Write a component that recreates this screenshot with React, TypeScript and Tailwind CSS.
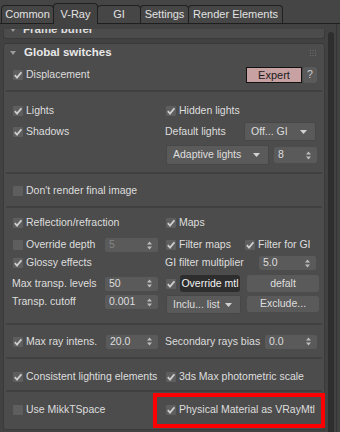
import React from 'react';

function Box({ on }: { on: boolean }) {
  return (
    <span className="w-[10px] h-[10px] shrink-0 bg-[#5e5e5e] rounded-[1px] flex items-center justify-center">
      {on && (
        <svg width="8" height="8" viewBox="0 0 8 8">
          <path d="M0.8 4.1 L3 6.6 L7.4 1.3" fill="none" stroke="#cfcfcf" strokeWidth="1.7" />
        </svg>
      )}
    </span>
  );
}

function Check({ on, label }: { on: boolean; label: string }) {
  return (
    <div className="flex items-center gap-[3px] whitespace-nowrap">
      <Box on={on} />
      <span>{label}</span>
    </div>
  );
}

function Spin({ v, cls, dim }: { v: string; cls: string; dim?: boolean }) {
  return (
    <div className={`flex items-center pl-[4px] pr-[6px] bg-[#5a5a5a] rounded-[2px] ${cls}`}>
      <span className={`flex-1 ${dim ? 'text-[#858585]' : ''}`}>{v}</span>
      <svg width="5" height="9" viewBox="0 0 5 9">
        <path d="M0 3.5 L2.5 0.5 L5 3.5Z M0 5.5 L2.5 8.5 L5 5.5Z" fill="#bdbdbd" />
      </svg>
    </div>
  );
}

function Drop({ v, cls }: { v: string; cls: string }) {
  return (
    <div className={`flex items-center justify-between pl-[6px] pr-[8px] bg-[#5a5a5a] border border-[#474747] rounded-[2px] ${cls}`}>
      <span className="whitespace-nowrap">{v}</span>
      <svg width="7" height="4" viewBox="0 0 7 4">
        <path d="M0 0H7L3.5 4Z" fill="#d2d2d2" />
      </svg>
    </div>
  );
}

function Sep({ cls }: { cls: string }) {
  return <div className={`h-[2px] mx-[2px] bg-[#404040] ${cls}`} />;
}

const tabs = [
  { t: 'Common', w: 'w-[53px]' },
  { t: 'V-Ray', w: 'w-[45px]', on: true },
  { t: 'GI', w: 'w-[44px]' },
  { t: 'Settings', w: 'w-[49px]' },
  { t: 'Render Elements', w: 'w-[95px]' },
];

export default function App() {
  return (
    <div className="relative w-[340px] h-[432px] overflow-hidden bg-[#454545] text-[10.5px] text-[#dedede] font-['Liberation_Sans',Arial,sans-serif]">
      <div className="h-[24px] flex items-end pl-[2px] border-b border-[#1f1f1f]">
        {tabs.map((tab) => (
          <div
            key={tab.t}
            className={`${tab.w} -ml-px flex items-center justify-center border border-b-0 border-[#202020] rounded-t-[4px] text-[11px] text-[#e2e2e2] ${
              tab.on ? 'h-[21px] -mb-px bg-[#424242] relative z-10' : 'h-[18px] bg-[#464646]'
            }`}
          >
            {tab.t}
          </div>
        ))}
      </div>

      <div className="flex bg-[#424242] h-[408px]">
        <div className="w-[326px] pl-[3px] pr-[1px] flex flex-col">
          <div className="mt-[5px] h-[10px] overflow-hidden bg-[#4c4c4c] border border-t-0 border-[#3a3a3a] rounded-b-[3px] flex items-start">
            <span className="ml-[6px] -mt-[1px]">
              <svg width="6" height="4" viewBox="0 0 6 4"><path d="M0 0H6L3 4Z" fill="#9a9a9a" /></svg>
            </span>
            <span className="ml-[7px] -mt-[6px] font-bold text-[11.5px] leading-[13px]">Frame buffer</span>
          </div>

          <div className="mt-[4px] bg-[#4c4c4c] border border-[#3a3a3a] rounded-[3px] flex flex-col pb-[10px]">
            <div className="h-[18px] flex items-center">
              <span className="ml-[6px] mr-[8px]">
                <svg width="6" height="4" viewBox="0 0 6 4"><path d="M0 0H6L3 4Z" fill="#9a9a9a" /></svg>
              </span>
              <span className="font-bold text-[11.5px] text-[#e8e8e8]">Global switches</span>
              <svg className="ml-auto mr-[8px]" width="6" height="6" viewBox="0 0 6 6">
                <g fill="#6e6e6e">
                  <rect x="0" y="0" width="1" height="1" /><rect x="2.5" y="0" width="1" height="1" /><rect x="5" y="0" width="1" height="1" />
                  <rect x="0" y="2.5" width="1" height="1" /><rect x="2.5" y="2.5" width="1" height="1" /><rect x="5" y="2.5" width="1" height="1" />
                  <rect x="0" y="5" width="1" height="1" /><rect x="2.5" y="5" width="1" height="1" /><rect x="5" y="5" width="1" height="1" />
                </g>
              </svg>
            </div>

            <div className="mt-[4px] h-[18px] flex items-center pl-[9px]">
              <div className="w-[145px]"><Check on label="Displacement" /></div>
              <div className="ml-[88px] flex items-center">
                <div className="w-[56px] h-[16px] bg-[#c8a2a3] border border-[#111] flex items-center justify-center text-[11px] text-[#1c1c1c]">Expert</div>
                <div className="ml-[1px] w-[14px] h-[16px] bg-[#5a5a5a] rounded-[3px] flex items-center justify-center text-[#cfcfcf]">?</div>
              </div>
            </div>

            <Sep cls="mt-[6px]" />

            <div className="mt-[9px] h-[19px] flex items-center pl-[9px]">
              <div className="w-[145px]"><Check on label="Lights" /></div>
              <div className="ml-[8px]"><Check on label="Hidden lights" /></div>
            </div>
            <div className="mt-[2px] h-[19px] flex items-center pl-[9px]">
              <div className="w-[145px]"><Check on label="Shadows" /></div>
              <div className="ml-[7px] flex items-center">
                <span className="w-[79px] whitespace-nowrap">Default lights</span>
                <Drop v="Off... GI" cls="w-[72px] h-[19px]" />
              </div>
            </div>
            <div className="mt-[4px] h-[20px] flex items-center pl-[9px]">
              <div className="w-[145px]" />
              <div className="ml-[8px] flex items-center">
                <Drop v="Adaptive lights" cls="w-[103px] h-[20px]" />
                <Spin v="8" cls="ml-[5px] w-[43px] h-[16px]" />
              </div>
            </div>

            <Sep cls="mt-[7px]" />

            <div className="mt-[8px] h-[18px] flex items-center pl-[9px]">
              <Check on={false} label="Don't render final image" />
            </div>

            <Sep cls="mt-[6px]" />

            <div className="mt-[6px] h-[18px] flex items-center pl-[9px]">
              <div className="w-[145px]"><Check on label="Reflection/refraction" /></div>
              <div className="ml-[8px]"><Check on label="Maps" /></div>
            </div>
            <div className="mt-[4px] h-[18px] flex items-center pl-[9px]">
              <div className="w-[145px] flex items-center">
                <Check on={false} label="Override depth" />
                <Spin v="5" dim cls="ml-auto w-[53px] h-[14px]" />
              </div>
              <div className="ml-[8px] flex items-center">
                <div className="w-[79px]"><Check on label="Filter maps" /></div>
                <Check on label="Filter for GI" />
              </div>
            </div>
            <div className="h-[18px] flex items-center pl-[9px]">
              <div className="w-[145px]"><Check on label="Glossy effects" /></div>
              <div className="ml-[7px] flex items-center">
                <span className="w-[94px] whitespace-nowrap">GI filter multiplier</span>
                <Spin v="5.0" cls="w-[57px] h-[14px]" />
              </div>
            </div>
            <div className="mt-[2px] h-[19px] flex items-center pl-[8px]">
              <div className="w-[146px] flex items-center">
                <span className="whitespace-nowrap">Max transp. levels</span>
                <Spin v="50" cls="ml-auto w-[53px] h-[14px]" />
              </div>
              <div className="ml-[8px] flex items-center">
                <Box on />
                <div className="ml-[4px] w-[60px] h-[17px] bg-[#2d2d2d] rounded-[3px] flex items-center justify-center text-[#f2f2f2] whitespace-nowrap">Override mtl</div>
                <div className="ml-[7px] w-[72px] h-[17px] bg-[#5a5a5a] rounded-[3px] flex items-center justify-center">defalt</div>
              </div>
            </div>
            <div className="mt-[2px] h-[19px] flex items-start pl-[8px]">
              <div className="w-[146px] h-[14px] flex items-center">
                <span className="whitespace-nowrap">Transp. cutoff</span>
                <Spin v="0.001" cls="ml-auto w-[53px] h-[14px]" />
              </div>
              <div className="ml-[8px] flex items-start">
                <Drop v="Inclu... list" cls="w-[75px] h-[19px]" />
                <div className="ml-[6px] mt-[1px] w-[72px] h-[16px] bg-[#5a5a5a] rounded-[3px] flex items-center justify-center">Exclude...</div>
              </div>
            </div>

            <Sep cls="mt-[9px]" />

            <div className="mt-[7px] h-[19px] flex items-center pl-[9px]">
              <div className="w-[145px] flex items-center">
                <Check on label="Max ray intens." />
                <Spin v="20.0" cls="ml-auto w-[52px] h-[14px]" />
              </div>
              <div className="ml-[7px] flex items-center">
                <span className="w-[100px] whitespace-nowrap">Secondary rays bias</span>
                <Spin v="0.0" cls="w-[52px] h-[14px]" />
              </div>
            </div>

            <Sep cls="mt-[6px]" />

            <div className="mt-[9px] h-[18px] flex items-center pl-[9px]">
              <div className="w-[145px]"><Check on label="Consistent lighting elements" /></div>
              <div className="ml-[8px]"><Check on label="3ds Max photometric scale" /></div>
            </div>

            <Sep cls="mt-[4px]" />

            <div className="mt-[9px] h-[18px] flex items-center pl-[9px]">
              <div className="w-[145px]"><Check on={false} label="Use MikkTSpace" /></div>
              <div className="ml-[8px]"><Check on label="Physical Material as VRayMtl" /></div>
            </div>
          </div>
        </div>

        <div className="w-[14px] flex">
          <div className="ml-[2px] mt-[8px] w-[6px] bg-[#2e2e2e] rounded-t-[3px]" />
          <div className="ml-[2px] w-px bg-[#353535]" />
        </div>
      </div>

      <div className="absolute left-[153px] top-[393px] w-[172px] h-[35px] border-[4px] border-[#ff0000]" />
    </div>
  );
}
